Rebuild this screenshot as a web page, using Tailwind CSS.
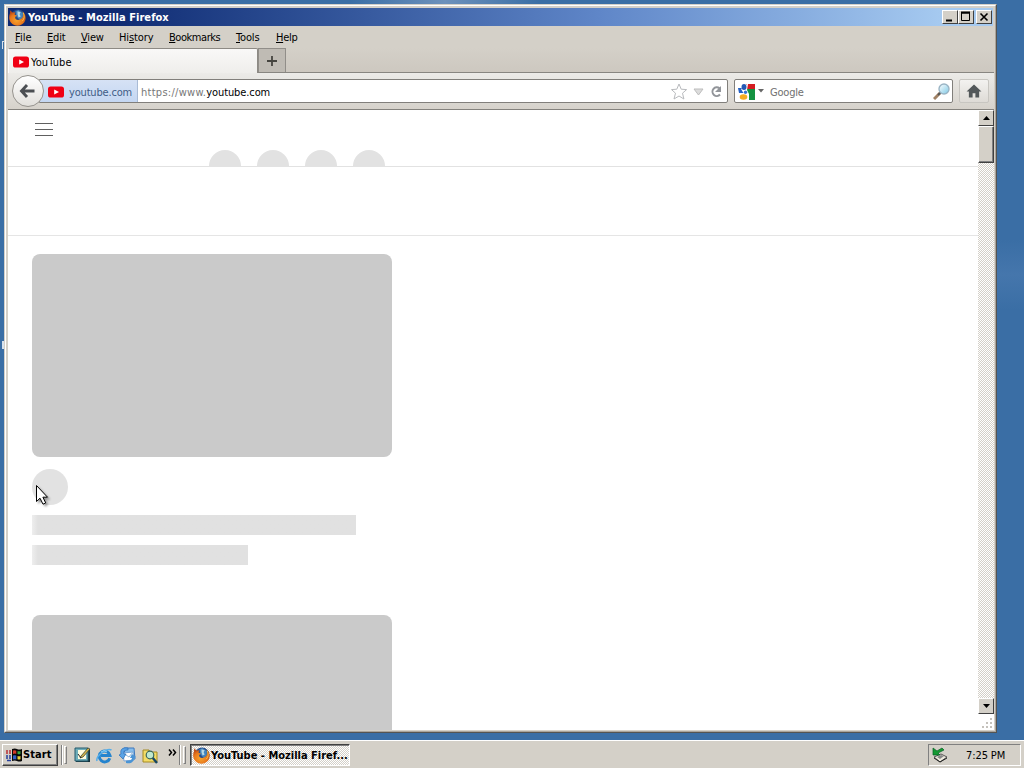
<!DOCTYPE html>
<html lang="en">
<head>
<meta charset="utf-8">
<title>YouTube - Mozilla Firefox</title>
<script src="https://cdn.jsdelivr.net/npm/@tailwindcss/browser@4"></script>
</head>
<body class="relative h-[768px] w-[1024px] overflow-hidden bg-[#3a6ea5] font-['DejaVu_Sans_Condensed','DejaVu_Sans',sans-serif] text-[11px] leading-[14px] text-black">
<svg class="absolute size-0">
  <defs>
    <radialGradient id="fx" cx=".45" cy=".65" r=".6"><stop offset="0" stop-color="#f7a52d"/><stop offset=".65" stop-color="#e8771c"/><stop offset="1" stop-color="#b94916"/></radialGradient>
    <linearGradient id="lens" x1="0" y1="0" x2="1" y2="1"><stop offset="0" stop-color="#fff"/><stop offset="1" stop-color="#7cc8e5"/></linearGradient>
    <symbol id="firefox" viewBox="0 0 16 16">
      <circle cx="8.5" cy="7.5" r="7" fill="#274c8a"/>
      <path d="M6 2 9 1 13 4 13 8 10 10 7 7Z" fill="#4384bd"/>
      <path d="m8 2 3 1-1 2 1 2-2 1-1-3z" fill="#b9d9e5"/>
      <path d="M1 1.2 3.3 3.4 5.8 3 5.2 5.3 7.5 6.2 5.8 7.5C5.5 10 8 11 10.7 9.7 13 8.6 14 6 13 2.7 16 5 16.6 9.4 14.3 12.7 11.5 16.4 5.5 16.7 2.2 13.2-.4 10.4-.2 6.4 1 4Z" fill="url(#fx)"/>
      <path d="M13.3 3.4c1.6 3 1.3 6-.8 8" fill="none" stroke="#f9c646" stroke-width=".9"/>
    </symbol>
    <symbol id="yt" viewBox="0 0 16 12"><rect y=".5" width="16" height="11" rx="2.6" fill="#f00014"/><path d="M6.2 3.4 11 6 6.2 8.6Z" fill="#fff"/></symbol>
  </defs>
</svg>
<div class="absolute left-[350px] top-0 h-[4px] w-[190px] bg-linear-to-r from-transparent via-[#6d91bb] to-transparent"></div>
<div class="absolute right-0 top-[240px] h-[70px] w-[27px] bg-linear-to-b from-transparent via-[#4576ac] to-transparent"></div>
<div class="absolute left-[2px] top-[41px] h-[8px] w-[2px] border-l border-t border-white/80"></div>
<div class="absolute left-[2px] top-[341px] h-[8px] w-[2px] border border-white/80"></div>

<!-- Browser window -->
<main class="absolute left-[4px] top-[4px] flex h-[729px] w-[993px] flex-col border border-t-[#d4d0c8] border-l-[#d4d0c8] border-r-[#555451] border-b-[#555451] bg-[#d4d0c8]">
 <div class="flex h-full flex-col border border-t-white border-l-white border-r-[#aaa49b] border-b-[#aaa49b] pl-[2px] pr-px pt-[2px]">
  <header class="mr-px flex h-[18px] shrink-0 items-center bg-linear-to-r from-[#0f2a72] from-10% via-[#5f86c8] via-60% to-[#a6caf0] to-95% pl-px pr-px">
    <svg class="size-[17px]"><use href="#firefox"/></svg>
    <h1 class="ml-[2px] flex-1 whitespace-nowrap pt-px font-bold tracking-[0.06px] text-white">YouTube - Mozilla Firefox</h1>
    <div class="flex gap-0">
      <span class="h-[14px] w-[16px] border border-t-white border-l-white border-r-[#404040] border-b-[#404040] bg-[#d4d0c8]"><svg class="h-[12px] w-[14px]"><path d="M3 9.5h6" stroke="#000" stroke-width="2"/></svg></span>
      <span class="h-[14px] w-[16px] border border-t-white border-l-white border-r-[#404040] border-b-[#404040] bg-[#d4d0c8]"><svg class="h-[12px] w-[14px]"><path d="M2.5 1v8.5h8V1M2 2h9" fill="none" stroke="#000"/><path d="M2 1.5h9" stroke="#000" stroke-width="2"/></svg></span>
      <span class="ml-[2px] h-[14px] w-[16px] border border-t-white border-l-white border-r-[#404040] border-b-[#404040] bg-[#d4d0c8]"><svg class="h-[12px] w-[14px]"><path d="m3.5 2.5 7 7m0-7-7 7" stroke="#000" stroke-width="1.6"/></svg></span>
    </div>
  </header>
  <nav class="flex h-[22px] shrink-0 items-center pl-[7px] pt-[2px]">
    <span class="w-[32px]"><u>F</u>ile</span><span class="w-[34px] tracking-[-0.2px]"><u>E</u>dit</span><span class="w-[38px] tracking-[-0.2px]"><u>V</u>iew</span><span class="w-[50px] tracking-[-0.1px]">Hi<u>s</u>tory</span><span class="w-[67px] tracking-[-0.45px]"><u>B</u>ookmarks</span><span class="w-[40px] tracking-[-0.15px]"><u>T</u>ools</span><span class="tracking-[-0.3px]"><u>H</u>elp</span>
  </nav>
  <div class="flex h-[25px] shrink-0 border-b border-[#888681] bg-linear-to-b from-[#d4d0c8] to-[#cdc8c0]">
    <div class="flex h-[25px] w-[250px] items-center rounded-t-[2px] border border-b-0 border-[#8d8a84] border-l-white bg-linear-to-b from-[#f9f8f7] to-[#efeeeb] pl-[4px] pt-[2px]">
      <svg class="h-[12px] w-[16px]"><use href="#yt"/></svg><span class="ml-[2px] pt-px tracking-[0.1px]">YouTube</span>
    </div>
    <div class="flex h-[24px] w-[28px] items-center justify-center border border-b-0 border-[#918e89] bg-[#bfbbb4]"><svg class="size-[12px]"><path d="M6 1v10M1 6h10" stroke="#45443f" stroke-width="1.8"/></svg></div>
  </div>
  <div class="flex h-[37px] shrink-0 items-center border-b border-[#84827d] bg-linear-to-b from-[#ecebe8] to-[#d6d2cb] pl-[4px]">
    <div class="relative z-10 flex size-[32px] items-center justify-center rounded-full border border-[#96938e] bg-linear-to-b from-white to-[#e2e0dc]">
      <svg class="mr-[2px] size-[18px]" viewBox="0 0 18 18"><path d="M9 3 3.5 9 9 15M4 9h12.5" fill="none" stroke="#4b4e52" stroke-width="2.9"/></svg>
    </div>
    <div class="-ml-[5px] flex h-[24px] w-[689px] items-center rounded-r-[2px] border border-[#817f7b] bg-white">
      <div class="flex h-full w-[98px] items-center border-r border-[#a9bbd5] bg-linear-to-b from-[#d6e2f5] to-[#c4d7f2] pl-[8px] pt-px text-[#405d87]"><svg class="h-[12px] w-[16px] shrink-0"><use href="#yt"/></svg><span class="ml-[5px] whitespace-nowrap pt-[2px] tracking-[-0.18px]">youtube.com</span></div>
      <span class="ml-[3px] flex-1 whitespace-nowrap pt-[3px]"><span class="tracking-[0.28px] text-[#777]">https://www.</span><span class="tracking-[-0.1px]">youtube.com</span></span>
      <svg class="mt-px h-[18px] w-[56px]" viewBox="0 0 56 18" fill="none"><path d="m8 1 2.2 5.2 5.4.4-4.1 3.6 1.4 5.8L8 13l-5 3 1.5-5.8L.5 6.6l5.3-.4Z" stroke="#b8babd"/><path d="M23 6h9l-4.5 6Z" fill="#dcdcdc" stroke="#bdbdbd"/><path d="M48.5 5.3A4.3 4.3 0 1 0 49 11.5" stroke="#92959a" stroke-width="2"/><path d="M50 3v6h-6Z" fill="#92959a"/></svg>
    </div>
    <div class="ml-[6px] flex h-[24px] w-[219px] items-center rounded-[2px] border border-[#817f7b] bg-white pl-[3px] pr-[2px]">
      <svg class="size-[17px]" viewBox="0 0 17 17"><path d="M8 1h9v6H8Z" fill="#d51d22"/><path d="M9 6h8v11H9Z" fill="#149241"/><path d="M0 5h5v5H1Z" fill="#2461c5"/><path d="M9 1h1L9 7l2 4v6H4l2-6-3-5Z" fill="#fff"/><ellipse cx="6" cy="4" rx="2.5" ry="3" fill="#2459b5"/><ellipse cx="5.5" cy="14" rx="3.8" ry="2.7" fill="#f5ac20"/><circle cx="7.5" cy="9.3" r="1.7" fill="#3575cf"/></svg>
      <svg class="ml-[3px] h-[4px] w-[6px]"><path d="M0 0h6L3 3.5Z" fill="#666"/></svg>
      <span class="ml-[6px] flex-1 pt-[3px] tracking-[-0.2px] text-[#707070]">Google</span>
      <svg class="size-[17px]" viewBox="0 0 17 17"><path d="m7 10-6 6" stroke="#a08165" stroke-width="3"/><path d="m8 9-3 3" stroke="#555" stroke-width="2"/><circle cx="11" cy="6" r="5" fill="url(#lens)" stroke="#9ab4c4" stroke-width="1.4"/></svg>
    </div>
    <div class="ml-[6px] flex h-[24px] w-[30px] items-center justify-center rounded-[2px] border border-[#c8c6c1] bg-linear-to-b from-[#f3f2f0] to-[#dedbd6]"><svg class="h-[14px] w-[16px]" viewBox="0 0 17 15"><path d="M8.5.5 16.5 8H14v6.5h-4V10H7v4.5H3V8H.5Z" fill="#53585a"/></svg></div>
  </div>
  <div class="flex h-[620px] min-h-0 bg-white">
    <section class="flex w-[970px] shrink-0 flex-col overflow-hidden">
      <div class="flex h-[57px] shrink-0 items-start overflow-hidden border-b border-[#e2e2e2] pl-[27px]">
        <svg class="mt-[12px] h-[15px] w-[18px] shrink-0"><path d="M0 1.5h18M0 7.5h18M0 13.5h18" stroke="#606060"/></svg>
        <div class="ml-[156px] mt-[40px] flex gap-[16px]"><i class="size-[32px] rounded-full bg-[#e2e2e2]"></i><i class="size-[32px] rounded-full bg-[#e2e2e2]"></i><i class="size-[32px] rounded-full bg-[#e2e2e2]"></i><i class="size-[32px] rounded-full bg-[#e2e2e2]"></i></div>
      </div>
      <div class="h-[69px] shrink-0 border-b border-[#e5e5e5]"></div>
      <div class="flex flex-col pl-[24px] pt-[18px]">
        <div class="h-[203px] w-[360px] shrink-0 rounded-[8px] bg-[#cacaca]"></div>
        <div class="mt-[12px] size-[36px] rounded-full bg-[#e2e2e2]"></div>
        <div class="mt-[10px] h-[20px] w-[324px] bg-linear-to-r from-[#eeeeee] to-[#e1e1e1] to-[6px]"></div>
        <div class="mt-[10px] h-[20px] w-[216px] bg-linear-to-r from-[#eeeeee] to-[#e1e1e1] to-[6px]"></div>
        <div class="mt-[50px] h-[203px] w-[360px] shrink-0 rounded-[8px] bg-[#cacaca]"></div>
      </div>
    </section>
    <aside class="flex w-[16px] shrink-0 flex-col">
      <div class="flex flex-1 flex-col bg-[repeating-conic-gradient(#d4d0c8_0_25%,#fff_0_50%)] bg-[length:2px_2px]">
        <div class="flex h-[16px] items-center justify-center border border-t-white border-l-white border-r-[#404040] border-b-[#404040] bg-[#d4d0c8]"><svg class="h-[4px] w-[7px]"><path d="M3.5 0 7 4H0Z"/></svg></div>
        <div class="h-[37px] border border-t-white border-l-white border-r-[#404040] border-b-[#404040] bg-[#d4d0c8] shadow-[inset_-1px_-1px_#808080]"></div>
        <div class="mt-auto flex h-[16px] items-center justify-center border border-t-white border-l-white border-r-[#404040] border-b-[#404040] bg-[#d4d0c8]"><svg class="h-[4px] w-[7px]"><path d="M0 0h7L3.5 4Z"/></svg></div>
      </div>
      <svg class="h-[16px] w-[16px]" fill="#c5c2bc"><path d="M12 4h2v2h-2zM8 8h2v2H8zM12 8h2v2h-2zM4 12h2v2H4zM8 12h2v2H8zM12 12h2v2h-2z"/></svg>
    </aside>
  </div>
 </div>
</main>

<svg class="absolute left-[35px] top-[484px] z-20 h-[22px] w-[16px] drop-shadow-[2px_2px_1px_rgba(0,0,0,0.35)]"><path d="M1.5 1.5v16l3.5-3.3 3 6 2.7-1.3-2.8-5.7H12.5Z" fill="#fff" stroke="#000"/></svg>

<!-- Taskbar -->
<footer class="absolute bottom-0 left-0 flex h-[28px] w-full items-center border-t border-white bg-[#d4d0c8] pl-[2px] pr-[3px] pt-px">
  <div class="flex h-[22px] w-[56px] items-center border border-t-white border-l-white border-r-[#404040] border-b-[#404040] pl-[3px] shadow-[inset_-1px_-1px_#808080]">
    <svg class="h-[14px] w-[17px] shrink-0" viewBox="0 0 17 14"><path d="M6 1q3-1 5 0t5 0v12q-3 1-5 0t-5 0Z" fill="#080808"/><path d="M7 2.5q2-.7 3.3.2v3.2Q9 5.3 7 6Z" fill="#d33929"/><path d="M11.5 3q1.5.6 3 0v3q-1.5.5-3 0Z" fill="#35a544"/><path d="M7 7.5q2-.7 3.3 0v4Q9 11 7 11.6Z" fill="#315ec5"/><path d="M11.5 8q1.5.6 3 0v3.3q-1.5.6-3 0Z" fill="#e8cf3a"/><path d="M0 3h2m1 0h2M0 5h2m1 0h2" stroke="#b93134" stroke-width="1.4"/><path d="M0 8h2m1 0h2M0 10h2m1 0h2M1 12.5h4" stroke="#263f9b" stroke-width="1.4"/></svg>
    <span class="font-bold tracking-[0.1px]">Start</span>
  </div>
  <i class="ml-[3px] h-[20px] w-[2px] border-l border-r border-l-[#808080] border-r-white"></i><i class="ml-[1px] h-[18px] w-[3px] border border-t-white border-l-white border-r-[#808080] border-b-[#808080]"></i>
  <svg class="ml-[7px] h-[18px] w-[18px]" viewBox="0 0 18 18"><path d="M2 3h14v13H2Z" fill="#17333b"/><path d="M1 2h13v13H1Z" fill="#6faeba" stroke="#24596b"/><path d="M4 4h8v9H4Z" fill="#fffde1"/><path d="m7 10 7-8 2 1-7 8-3 1Z" fill="#d4b64a" stroke="#39453b" stroke-width=".8"/><path d="m4 8 3 4" stroke="#222"/></svg>
  <svg class="ml-[4px] h-[17px] w-[17px]" viewBox="0 0 17 17" fill="none"><path d="M13.8 11.2A5.4 5.4 0 1 1 14 8.5H5" stroke="#2584ce" stroke-width="3"/><path d="M1 14C-.5 9 11 .5 15.5 3" stroke="#55aeea" stroke-width="1.5"/><path d="M5 5q3-3 6 0" stroke="#94d5f5"/></svg>
  <svg class="ml-[6px] size-[17px]" viewBox="0 0 17 17"><path d="M5 1h10l1 11-9 2Z" fill="#86bdec" stroke="#3f78bd"/><path d="m4 6 10-1 1 8-10 1Z" fill="#fff" stroke="#78a5d6"/><path d="m4 6 6 4 4-5" fill="none" stroke="#8fb4d6"/><path d="M9 1C3 0 1 3 2 7L0 8l4 4 3-5-2 0C4 4 6 3 9 3Z" fill="#5aa3e6" stroke="#2d6fb8" stroke-width=".7"/><path d="M7 16c5 1 8-1 8-5l2-1-4-3-2 4h2c0 2-2 3-6 3Z" fill="#4a94d5"/></svg>
  <svg class="ml-[6px] size-[17px]" viewBox="0 0 17 17"><path d="M1 3h6l1 2h7v10H1Z" fill="#f3db65" stroke="#a48a24"/><path d="m10 10 5 6" stroke="#164663" stroke-width="2.4"/><circle cx="8" cy="8" r="3.8" fill="#bfe8cf" stroke="#38665b" stroke-width="1.2"/></svg>
  <svg class="mb-[6px] ml-[9px] h-[7px] w-[9px]" fill="none" stroke="#000" stroke-width="1.5"><path d="m1 .5 2.5 3L1 6.5m4-6 2.5 3L5 6.5"/></svg>
  <i class="ml-[2px] h-[20px] w-[2px] border-l border-r border-l-[#808080] border-r-white"></i><i class="ml-[2px] h-[18px] w-[3px] border border-t-white border-l-white border-r-[#808080] border-b-[#808080]"></i>
  <div class="ml-[4px] flex h-[22px] w-[160px] items-center border border-t-[#404040] border-l-[#404040] border-r-white border-b-white bg-[repeating-conic-gradient(#d4d0c8_0_25%,#fff_0_50%)] bg-[length:2px_2px] pl-[2px] shadow-[inset_1px_1px_#808080]"><svg class="size-[17px] shrink-0"><use href="#firefox"/></svg><span class="ml-px whitespace-nowrap pt-[2px] font-bold tracking-[0px]">YouTube - Mozilla Firef...</span></div>
  <div class="ml-auto flex h-[22px] w-[93px] items-center border border-t-[#808080] border-l-[#808080] border-r-white border-b-white pl-[2px]">
    <svg class="size-[18px]" viewBox="0 0 18 18"><path d="m3 11 7-3 6 3-7 5Z" fill="#eeeade" stroke="#555"/><path d="m3 12 6 4 7-4" fill="none" stroke="#222"/><path d="m6 11 4-2 3 1-4 3Z" fill="#888"/><path d="M2 2v7h7L7 7l6-3-2-2-5 3Z" fill="#159a32" stroke="#075f25" stroke-width=".7"/></svg>
    <span class="ml-[17px] whitespace-nowrap pt-[2px] tracking-[-0.1px]">7:25 PM</span>
  </div>
</footer>
</body>
</html>
